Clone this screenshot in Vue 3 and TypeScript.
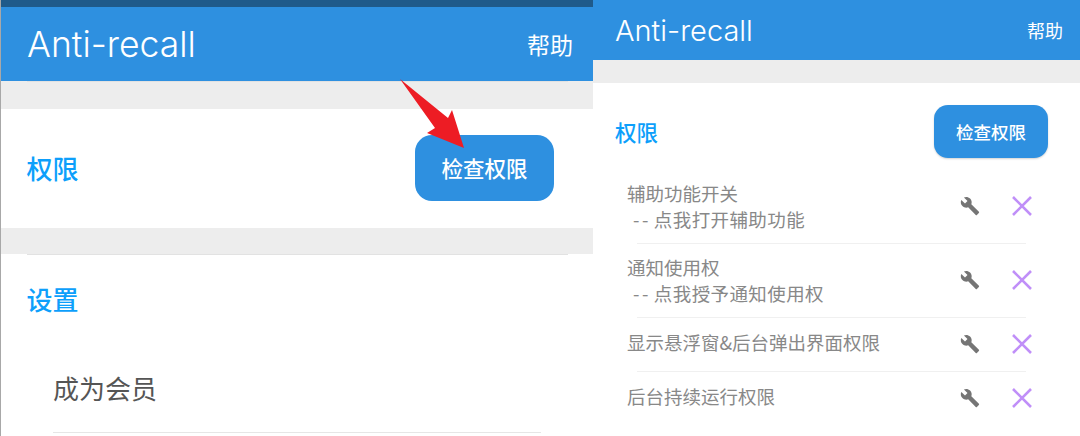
<script setup lang="ts">
interface PermRow {
  title: string
  hint?: string
  height: number
}

const permRows: PermRow[] = [
  { title: '辅助功能开关', hint: '点我打开辅助功能', height: 74 },
  { title: '通知使用权', hint: '点我授予通知使用权', height: 74 },
  { title: '显示悬浮窗&后台弹出界面权限', height: 54 },
  { title: '后台持续运行权限', height: 54 },
]

const wrenchPath =
  'M22.7 19l-9.1-9.1c.9-2.3.4-5-1.5-6.9-2-2-5-2.4-7.4-1.3L9 6 6 9 1.6 4.7C.4 7.1.9 10.1 2.9 12.1c1.9 1.9 4.6 2.4 6.9 1.5l9.1 9.1c.4.4 1 .4 1.4 0l2.3-2.3c.5-.4.5-1.1.1-1.4z'
</script>

<template>
  <div class="page">
    <!-- 左边的截图 -->
    <section class="shot shot-left">
      <div class="statusbar"></div>
      <header class="appbar">
        <span class="title">Anti-recall</span>
        <span class="help">帮助</span>
      </header>
      <div class="band"><i class="band-line"></i></div>
      <div class="perm-row">
        <span class="heading">权限</span>
        <button class="check-btn" type="button">检查权限</button>
      </div>
      <div class="band band-short"></div>
      <div class="settings">
        <i class="settings-line"></i>
        <div class="heading settings-heading">设置</div>
        <div class="member">成为会员</div>
      </div>

      <svg class="arrow" width="70" height="76" viewBox="0 0 70 76">
        <path d="M1 0 L49 39 L53 31 L65 69 L28 54 L36 49 Z" fill="#ed1c24" />
      </svg>
    </section>

    <!-- 右边的截图 -->
    <section class="shot shot-right">
      <header class="appbar appbar-small">
        <span class="title title-small">Anti-recall</span>
        <span class="help help-small">帮助</span>
      </header>
      <div class="band band-small"></div>
      <div class="perm-head">
        <span class="heading heading-small">权限</span>
        <button class="check-btn check-btn-small" type="button">检查权限</button>
      </div>
      <ul class="perm-list">
        <li
          v-for="row in permRows"
          :key="row.title"
          class="perm-item"
          :style="{ height: `${row.height}px` }"
        >
          <div class="perm-text" :class="{ 'perm-text-single': !row.hint }">
            <div>{{ row.title }}</div>
            <div v-if="row.hint" class="perm-hint"><span class="dashes">--</span>{{ row.hint }}</div>
          </div>
          <svg class="wrench" width="20" height="20" viewBox="0 0 24 24">
            <path :d="wrenchPath" fill="#757575" />
          </svg>
          <svg class="cross" width="20" height="20" viewBox="0 0 20 20">
            <path d="M1 1 L19 19 M19 1 L1 19" stroke="#c08ff8" stroke-width="2.6" fill="none" />
          </svg>
        </li>
      </ul>
    </section>
  </div>
</template>

<style scoped>
.page {
  display: grid;
  grid-template-columns: 593px 487px;
  width: 1080px;
  height: 436px;
  overflow: hidden;
  background: #fff;
  font-family: Inter, "Noto Sans CJK SC", sans-serif;
}

.shot {
  position: relative;
  height: 436px;
  overflow: hidden;
  background: #fff;
}

.shot-left {
  border-left: 1px solid #a8a8a8;
  box-sizing: border-box;
}

.statusbar {
  height: 7px;
  background: #1f5a8a;
}

.appbar {
  display: flex;
  align-items: center;
  justify-content: space-between;
  height: 74px;
  padding: 0 20px 0 26px;
  background: #2e90e0;
  color: #fff;
}

.appbar-small {
  height: 60px;
  padding: 0 17px 0 22px;
}

.title {
  font-size: 35.5px;
  font-weight: 300;
}

.title-small {
  font-size: 29px;
}

.help {
  font-size: 23px;
  font-family: "Noto Sans CJK SC", sans-serif;
}

.help-small {
  font-size: 18px;
}

.band {
  position: relative;
  height: 28px;
  background: #ededed;
}

.band-short {
  height: 26px;
}

.band-small {
  height: 23px;
}

.band-line {
  display: block;
  height: 1px;
  margin: 0 25px 0 26px;
  background: #e2e2e2;
}

.perm-row {
  display: flex;
  align-items: center;
  justify-content: space-between;
  box-sizing: border-box;
  height: 119px;
  padding: 0 38px 2px 25.5px;
}

.heading {
  color: #0d9ffb;
  font-size: 26px;
  font-weight: 500;
  font-family: "Noto Sans CJK SC", sans-serif;
}

.heading-small {
  font-size: 21.5px;
}

.check-btn {
  width: 139px;
  height: 66px;
  margin-right: 1px;
  padding: 0;
  border: 0;
  border-radius: 17px;
  background: #2e90e0;
  color: #fff;
  font-size: 21.5px;
  font-weight: 500;
  font-family: "Noto Sans CJK SC", sans-serif;
}

.check-btn-small {
  width: 114px;
  height: 53px;
  margin-right: 0;
  border-radius: 14px;
  font-size: 17.5px;
  box-shadow: 0 1px 2px rgba(0, 0, 0, 0.18);
}

.settings {
  padding: 0 0 0 26px;
}

.settings-line {
  display: block;
  height: 1px;
  margin-right: 25px;
  background: #e2e2e2;
}

.settings-heading {
  margin: 25px 0 0 -0.5px;
  line-height: 38px;
}

.member {
  width: 488px;
  margin: 51px 0 0 26px;
  padding-bottom: 25px;
  border-bottom: 1px solid #e6e6e6;
  color: #555;
  font-size: 26px;
  line-height: 38px;
  font-family: "Noto Sans CJK SC", sans-serif;
}

.arrow {
  position: absolute;
  top: 79px;
  left: 398px;
}

.perm-head {
  display: flex;
  align-items: center;
  justify-content: space-between;
  height: 97px;
  padding: 0 32px 0 22px;
}

.perm-list {
  margin: -11px 0 0;
  padding: 0;
  list-style: none;
}

.perm-item {
  position: relative;
  display: flex;
  align-items: center;
  box-sizing: border-box;
  padding: 0 48px 0 34px;
  color: #888;
  font-size: 18.5px;
  line-height: 26px;
  font-family: "Noto Sans CJK SC", sans-serif;
}

.perm-item + .perm-item::before {
  content: "";
  position: absolute;
  top: 0;
  left: 44px;
  right: 54px;
  height: 1px;
  background: #f0f0f0;
}

.perm-text {
  flex: 1;
}

.perm-text-single {
  margin-top: -5px;
}

.perm-hint {
  padding-left: 6px;
  letter-spacing: 0.4px;
  white-space: nowrap;
}

.dashes {
  margin-right: 3px;
  letter-spacing: 2.5px;
}

.cross {
  margin-left: 32px;
}
</style>
